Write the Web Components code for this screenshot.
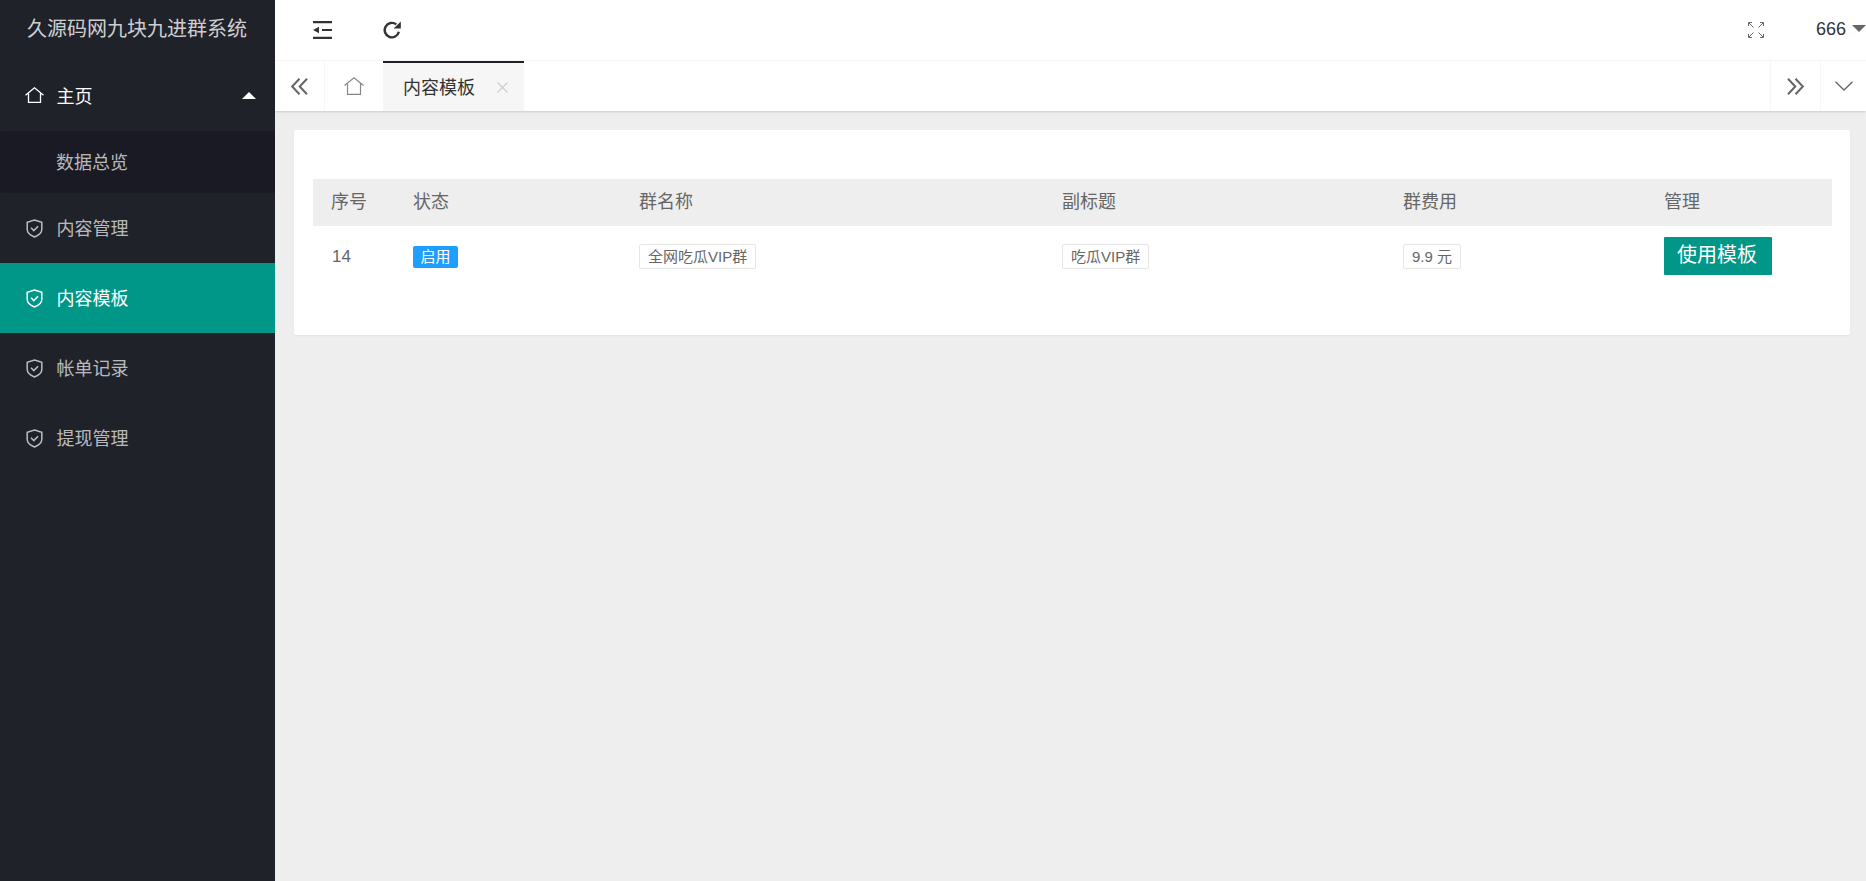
<!DOCTYPE html>
<html lang="zh">
<head>
<meta charset="utf-8">
<title>内容模板</title>
<style>
    html, body { margin: 0; height: 100%; }
    body { font-family: "Liberation Sans", "Noto Sans CJK SC", sans-serif; }
</style>
</head>
<body>

<admin-layout>
    <side-menu slot="side" title-text="久源码网九块九进群系统">
        <menu-item icon="home" caret bright>主页</menu-item>
        <menu-sub>数据总览</menu-sub>
        <menu-item icon="shield">内容管理</menu-item>
        <menu-item icon="shield" active>内容模板</menu-item>
        <menu-item icon="shield">帐单记录</menu-item>
        <menu-item icon="shield">提现管理</menu-item>
    </side-menu>
    <top-bar slot="top" user="666"></top-bar>
    <tab-bar slot="top" label="内容模板"></tab-bar>
    <content-card>
        <tpl-row head>
            <span>序号</span><span>状态</span><span>群名称</span><span>副标题</span><span>群费用</span><span>管理</span>
        </tpl-row>
        <tpl-row>
            <span>14</span>
            <span><tpl-badge>启用</tpl-badge></span>
            <span><tpl-tag>全网吃瓜VIP群</tpl-tag></span>
            <span><tpl-tag>吃瓜VIP群</tpl-tag></span>
            <span><tpl-tag>9.9 元</tpl-tag></span>
            <span><tpl-button>使用模板</tpl-button></span>
        </tpl-row>
    </content-card>
</admin-layout>

<script>
const ICONS = {
    home: '<svg width="19" height="16" viewBox="0 0 19 16" fill="none" stroke="currentColor" stroke-width="1.300"><path d="M.5 8.300 9.500.8l9 7.500M3.500 6.500v9h12v-9"/></svg>',
    shield: '<svg class="shield" width="17" height="19" viewBox="0 0 17 19" fill="none" stroke="currentColor" stroke-width="1.500"><path d="M8.500 1 15.800 3.400v7.100c0 3.300-3.400 5.900-7.300 7.500-3.900-1.600-7.300-4.200-7.300-7.500V3.400z"/><path d="m5 8.800 2.800 2.800 4.300-4.300"/></svg>'
};

customElements.define('admin-layout', class extends HTMLElement {
    constructor() {
        super();
        const shadowRoot = this.attachShadow({mode: 'open'});
        shadowRoot.innerHTML = `
            <style>
                :host { display: grid; grid-template-columns: 275px 1fr; height: 881px; background-color: #eeeeee; overflow: hidden; }
                .main { display: flex; flex-direction: column; min-width: 0; }
                .body { padding: 19px 16px 0 19px; }
            </style>
            <slot name="side"></slot>
            <div class="main">
                <slot name="top"></slot>
                <div class="body"><slot></slot></div>
            </div>
        `;
    }
});

customElements.define('side-menu', class extends HTMLElement {
    constructor() {
        super();
        const shadowRoot = this.attachShadow({mode: 'open'});
        shadowRoot.innerHTML = `
            <style>
                :host { display: block; background-color: #20222a; }
                .title { height: 60px; line-height: 58px; padding-left: 27px; font-size: 20px; color: rgba(255, 255, 255, 0.8); white-space: nowrap; }
            </style>
            <div class="title">${this.getAttribute('title-text')}</div>
            <slot></slot>
        `;
    }
});

customElements.define('menu-item', class extends HTMLElement {
    constructor() {
        super();
        const shadowRoot = this.attachShadow({mode: 'open'});
        const caret = this.hasAttribute('caret') ? '<i class="caret"></i>' : '';
        shadowRoot.innerHTML = `
            <style>
                :host { display: flex; align-items: center; box-sizing: border-box; height: 70px; padding: 0 0 2px 25px; font-size: 18px; color: rgba(255, 255, 255, 0.7); }
                :host([active]) { background-color: #009688; color: #ffffff; }
                :host([bright]) { color: #ffffff; height: 71px; }
                .icon { display: flex; width: 31.500px; flex: none; }
                .shield { margin-left: 1px; position: relative; top: 1px; }
                .caret { margin: 1px 19px 0 auto; border: 7px solid transparent; border-top: 0; border-bottom: 7px solid #ffffff; }
            </style>
            <span class="icon">${ICONS[this.getAttribute('icon')]}</span>
            <slot></slot>
            ${caret}
        `;
    }
});

customElements.define('menu-sub', class extends HTMLElement {
    constructor() {
        super();
        const shadowRoot = this.attachShadow({mode: 'open'});
        shadowRoot.innerHTML = `
            <style>
                :host { display: flex; align-items: center; box-sizing: border-box; height: 62px; padding: 0 0 2px 56px; font-size: 18px; color: rgba(255, 255, 255, 0.7); background-color: #191a23; border-radius: 2px; }
            </style>
            <slot></slot>
        `;
    }
});

customElements.define('top-bar', class extends HTMLElement {
    constructor() {
        super();
        const shadowRoot = this.attachShadow({mode: 'open'});
        shadowRoot.innerHTML = `
            <style>
                :host { display: flex; align-items: center; height: 60px; background-color: #ffffff; border-bottom: 1px solid #f6f6f6; color: #333333; padding-left: 38px; }
                svg { display: block; }
                .refresh { margin-left: 51px; }
                .right { margin-left: auto; display: flex; align-items: center; }
                .user { margin-left: 52px; font-size: 18px; color: #333333; position: relative; top: -1px; }
                .arrow { margin-left: 6px; position: relative; top: -2px; border: 7.500px solid transparent; border-bottom: 0; border-top: 7px solid #666666; }
            </style>
            <svg width="19" height="18" viewBox="0 0 19 18" fill="#333333"><path d="M0 0h19v2.200H0zM9 7.900h10v2.200H9zM0 15.800h19V18H0zM6 5.800v6.400L0 9z"/></svg>
            <svg class="refresh" width="18" height="18" viewBox="0 0 18 18" fill="none" stroke="#333333" stroke-width="2.400"><path d="M15.900 10.800A7.200 7.200 0 1 1 13.300 3.400"/><path d="M17.800 .4v7.200h-7.200z" fill="#333333" stroke="none"/></svg>
            <div class="right">
                <svg width="16" height="16" viewBox="0 0 16 16" fill="none" stroke="#666666" stroke-width="1"><path d="m1 1 4.500 4.500M15 1l-4.500 4.500M1 15l4.500-4.500M15 15l-4.500-4.500"/><path d="M0.500 4V.5H4M12 .5h3.500V4M.5 12v3.500H4M12 15.500h3.500V12"/></svg>
                <span class="user">${this.getAttribute('user')}</span>
                <i class="arrow"></i>
            </div>
        `;
    }
});

customElements.define('tab-bar', class extends HTMLElement {
    constructor() {
        super();
        const shadowRoot = this.attachShadow({mode: 'open'});
        shadowRoot.innerHTML = `
            <style>
                :host { display: flex; height: 50px; background-color: #ffffff; box-shadow: 0 1px 2px rgba(0, 0, 0, 0.15); color: #666666; }
                .cell { display: flex; align-items: center; justify-content: center; box-sizing: border-box; flex: none; }
                .back { width: 50px; border-right: 1px solid #f6f6f6; }
                .home { width: 58px; }
                .tab { width: 141px; padding: 0 0 3px 20px; justify-content: flex-start; background-color: #f6f6f6; border-top: 2px solid #20222a; font-size: 18px; color: #333333; }
                .close { margin: 3px 0 0 22px; color: #cccccc; display: flex; }
                .next { width: 50px; margin-left: auto; border-left: 1px solid #f6f6f6; }
                .down { width: 46px; border-left: 1px solid #f6f6f6; }
            </style>
            <div class="cell back"><svg width="17" height="17" viewBox="0 0 17 17" fill="none" stroke="#666666" stroke-width="2"><path d="M8.500 .8 1.200 8.500l7.300 7.700M16 .8 8.700 8.500l7.300 7.700"/></svg></div>
            <div class="cell home"><svg width="20" height="18" viewBox="0 0 20 18" fill="none" stroke="#888888" stroke-width="1.200"><path d="M.5 8.500 10 .8l9.500 7.700M3.500 6.500v10.800h13V6.500"/></svg></div>
            <div class="cell tab">${this.getAttribute('label')}<span class="close"><svg width="11" height="11" viewBox="0 0 11 11" fill="none" stroke="currentColor" stroke-width="1.100"><path d="m.5.500 10 10M10.500.500l-10 10"/></svg></span></div>
            <div class="cell next"><svg width="17" height="17" viewBox="0 0 17 17" fill="none" stroke="#666666" stroke-width="2"><path d="m8.500 .8 7.300 7.700-7.300 7.700M1 .8l7.300 7.700L1 16.200"/></svg></div>
            <div class="cell down"><svg width="18" height="10" viewBox="0 0 18 10" fill="none" stroke="#666666" stroke-width="1.300"><path d="m.5.800 8.500 8.200L17.500.8"/></svg></div>
        `;
    }
});

customElements.define('content-card', class extends HTMLElement {
    constructor() {
        super();
        const shadowRoot = this.attachShadow({mode: 'open'});
        shadowRoot.innerHTML = `
            <style>
                :host { display: block; height: 205px; box-sizing: border-box; padding: 49px 18px 0 19px; background-color: #ffffff; border-radius: 2px; box-shadow: 0 1px 2px rgba(0, 0, 0, 0.05); }
            </style>
            <slot></slot>
        `;
    }
});

customElements.define('tpl-row', class extends HTMLElement {
    constructor() {
        super();
        const shadowRoot = this.attachShadow({mode: 'open'});
        shadowRoot.innerHTML = `
            <style>
                :host { display: grid; grid-template-columns: 82px 226px 423px 341px 261px 186px; align-items: center; box-sizing: border-box; height: 61px; padding-bottom: 2px; color: #666666; font-size: 17px; }
                :host([head]) { height: 47px; padding-bottom: 0; background-color: #eeeeee; font-size: 18px; }
                ::slotted(span) { padding-left: 18px; line-height: 25px; }
                :host(:not([head])) ::slotted(span:first-child) { padding: 2px 0 0 19px; }
            </style>
            <slot></slot>
        `;
    }
});

customElements.define('tpl-badge', class extends HTMLElement {
    constructor() {
        super();
        const shadowRoot = this.attachShadow({mode: 'open'});
        shadowRoot.innerHTML = `
            <style>
                :host { display: inline-block; height: 22px; line-height: 22px; padding: 0 7.500px; font-size: 15px; color: #ffffff; background-color: #1e9fff; border-radius: 2px; vertical-align: middle; }
            </style>
            <slot></slot>
        `;
    }
});

customElements.define('tpl-tag', class extends HTMLElement {
    constructor() {
        super();
        const shadowRoot = this.attachShadow({mode: 'open'});
        shadowRoot.innerHTML = `
            <style>
                :host { display: inline-block; height: 25px; line-height: 23px; box-sizing: border-box; padding: 0 8px; font-size: 15px; color: #666666; background-color: #ffffff; border: 1px solid #e6e6e6; border-radius: 2px; vertical-align: middle; }
            </style>
            <slot></slot>
        `;
    }
});

customElements.define('tpl-button', class extends HTMLElement {
    constructor() {
        super();
        const shadowRoot = this.attachShadow({mode: 'open'});
        shadowRoot.innerHTML = `
            <style>
                :host { display: inline-block; height: 38px; line-height: 37px; padding: 0 15px 0 13px; font-size: 20px; color: #ffffff; background-color: #009688; border-radius: 1px; vertical-align: middle; }
            </style>
            <slot></slot>
        `;
    }
});
</script>
</body>
</html>
